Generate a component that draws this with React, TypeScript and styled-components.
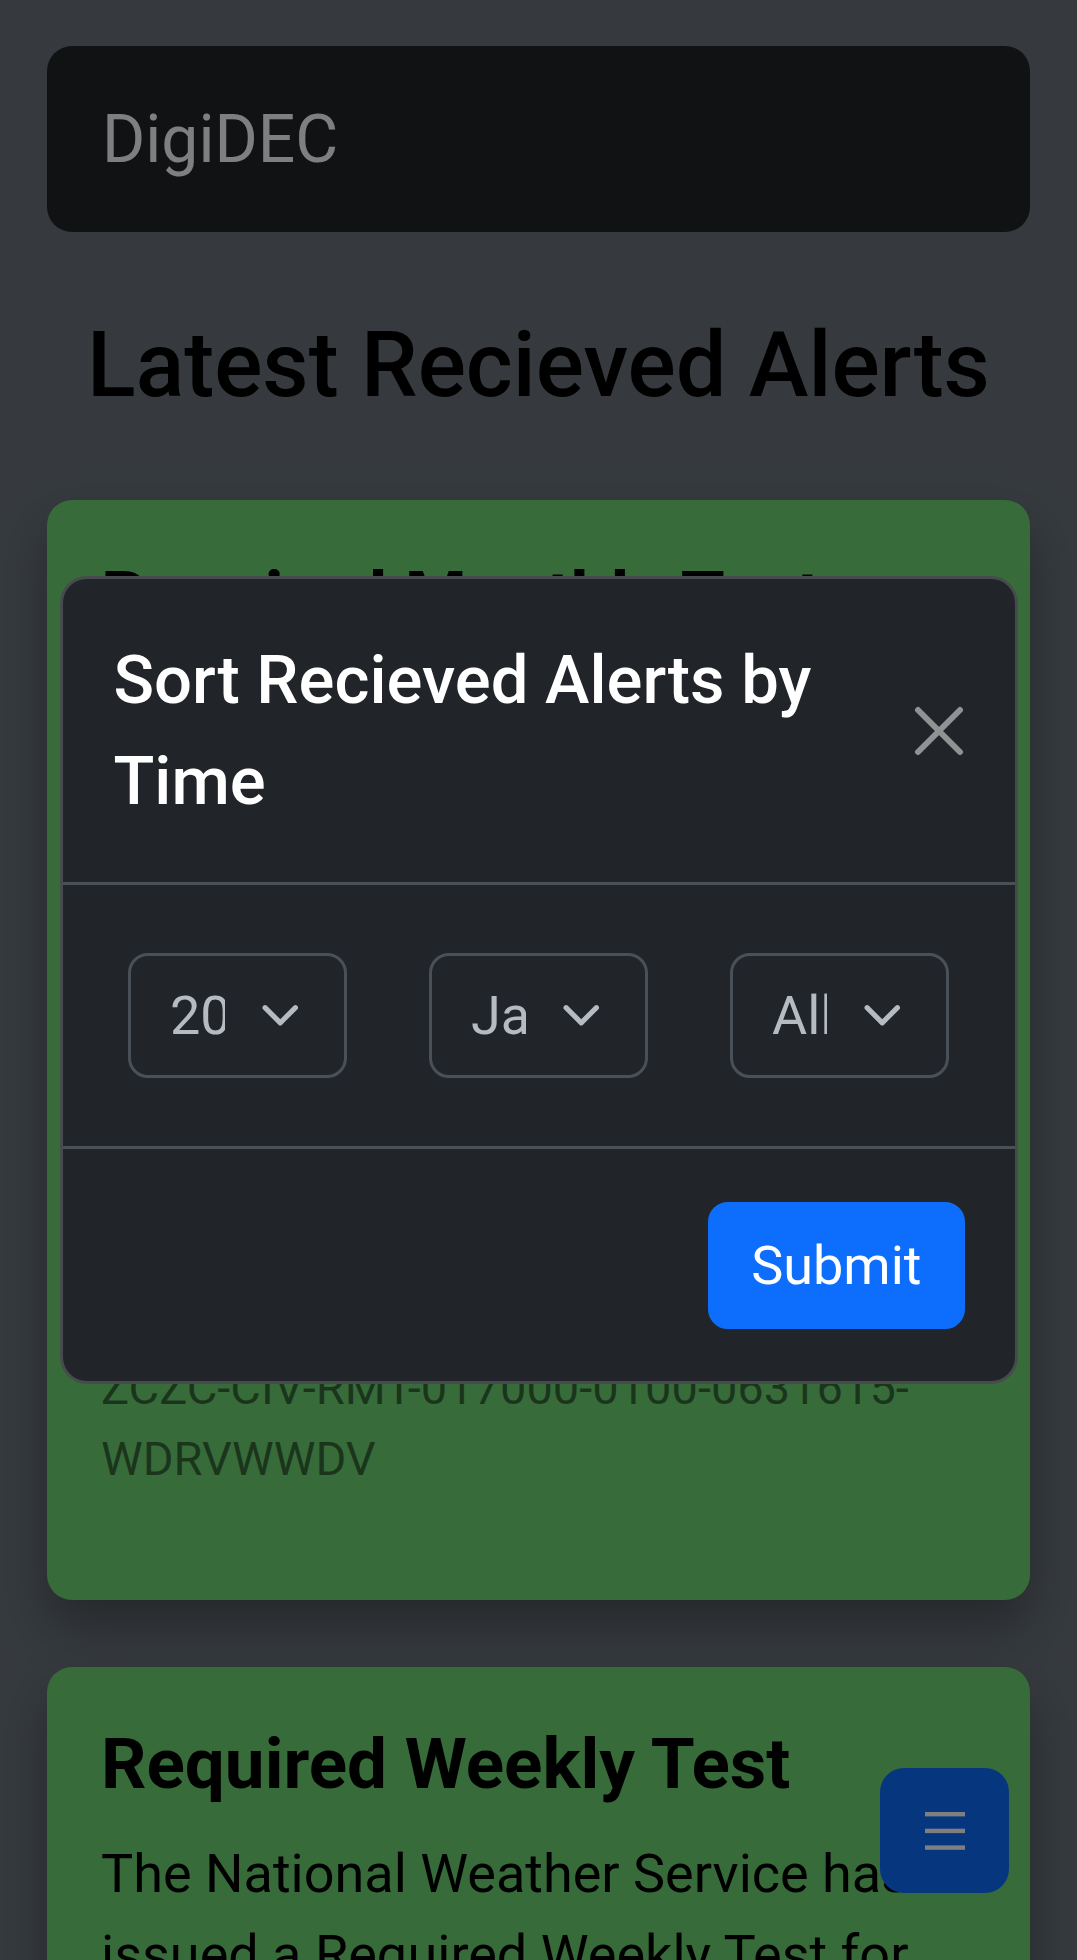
import { FC } from 'react';
import styled, { createGlobalStyle } from 'styled-components';

interface Alert {
  id: number;
  title: string;
  text: string;
  header: string;
}

const alerts: Alert[] = [
  {
    id: 1,
    title: 'Required Monthly Test',
    text: 'The National Weather Service has issued a Required Monthly Test for the following counties: Lancaster, PA; Berks, PA; Chester, PA; Lebanon, PA; York, PA; Dauphin, PA. Effective until 7:15 PM.',
    header: 'ZCZC-CIV-RMT-017000-0100-0631615-WDRVWWDV',
  },
  {
    id: 2,
    title: 'Required Weekly Test',
    text: 'The National Weather Service has issued a Required Weekly Test for the following counties: Lancaster, PA; Berks, PA; Chester, PA; Lebanon, PA; York, PA. Effective until 6:45 PM.',
    header: 'ZCZC-WXR-RWT-042071-0030-0621815-WDRVWWDV',
  },
];

const GlobalStyle = createGlobalStyle`
  html, body {
    margin: 0;
    padding: 0;
    background: #6c757d;
    font-family: Roboto, "Liberation Sans", sans-serif;
    overflow: hidden;
  }
  * {
    box-sizing: border-box;
  }
`;

const Page = styled.div`
  padding: 46px 47px 0;
`;

const Navbar = styled.nav`
  display: flex;
  align-items: center;
  height: 186px;
  padding: 0 55px;
  background: #212529;
  border-radius: 25px;
`;

const Brand = styled.a`
  color: #fff;
  font-size: 66px;
  line-height: 1.5;
  text-decoration: none;
`;

const Heading = styled.h1`
  margin: 80px 0;
  text-align: center;
  font-size: 90px;
  font-weight: 500;
  line-height: 1.2;
  color: #000;
`;

const Card = styled.div`
  padding: 54px;
  margin-bottom: 67px;
  background: #6ed672;
  border-radius: 25px;
  box-shadow: 0 27px 50px rgba(0, 0, 0, 0.3);
`;

const CardTitle = styled.h3`
  margin: 0 0 27px;
  font-size: 71px;
  font-weight: 700;
  line-height: 1.2;
  color: #000;
`;

const CardText = styled.p<{ $gap?: number }>`
  margin: 0 0 ${({ $gap }) => $gap ?? 54}px;
  font-size: 54px;
  line-height: 1.5;
  color: #000;
`;

const CardHeader = styled.p`
  margin: 0 0 52px;
  font-size: 47px;
  line-height: 1.5;
  color: rgba(0, 0, 0, 0.5);
`;

const Fab = styled.button`
  position: fixed;
  right: 68px;
  bottom: 67px;
  z-index: 1000;
  display: flex;
  align-items: center;
  justify-content: center;
  width: 129px;
  height: 125px;
  padding: 0;
  border: none;
  border-radius: 24px;
  background: #0d6efd;
`;

const Backdrop = styled.div`
  position: fixed;
  inset: 0;
  z-index: 1050;
  background: rgba(0, 0, 0, 0.5);
`;

const ModalWrap = styled.div`
  position: fixed;
  inset: 0;
  z-index: 1055;
  display: flex;
  align-items: center;
  justify-content: center;
`;

const Dialog = styled.div`
  width: 958px;
  background: #212529;
  border: 3px solid rgba(255, 255, 255, 0.175);
  border-radius: 27px;
`;

const ModalHeader = styled.div`
  display: flex;
  align-items: center;
  padding: 51px;
  border-bottom: 3px solid #495057;
`;

const ModalTitle = styled.h5`
  flex: 1;
  margin: 0 40px 0 0;
  font-size: 67px;
  font-weight: 500;
  line-height: 1.5;
  color: #fff;
`;

const CloseButton = styled.button`
  flex: none;
  width: 50px;
  height: 50px;
  padding: 0;
  border: none;
  background: none;
  color: #909294;
  display: flex;
`;

const ModalBody = styled.div`
  display: flex;
  justify-content: center;
  gap: 82px;
  padding: 68px 0;
`;

const Select = styled.div`
  display: flex;
  align-items: center;
  justify-content: space-between;
  width: 219px;
  height: 125px;
  padding: 0 44px 0 39px;
  border: 3px solid #495057;
  border-radius: 20px;
  background: #212529;
  color: #b5bbc1;
  font-size: 54px;
`;

const SelectValue = styled.span`
  width: 55px;
  overflow: hidden;
  white-space: nowrap;
  line-height: 81px;
`;

const ModalFooter = styled.div`
  display: flex;
  justify-content: flex-end;
  padding: 53px 50px 52px;
  border-top: 3px solid #495057;
`;

const SubmitButton = styled.button`
  padding: 20px 40px;
  border: 3px solid #0d6efd;
  border-radius: 20px;
  background: #0d6efd;
  color: #fff;
  font-family: inherit;
  font-size: 54px;
  line-height: 81px;
`;

const Chevron: FC = () => (
  <svg width="40.5" height="40.5" viewBox="0 0 16 16" fill="none">
    <path d="m2 5 6 6 6-6" stroke="#b5bbc1" strokeWidth="2" strokeLinecap="round" strokeLinejoin="round" />
  </svg>
);

const MenuIcon: FC = () => (
  <svg width="40" height="38" viewBox="0 0 40 38" fill="#fff">
    <rect x="0" y="0" width="40" height="4.4" />
    <rect x="0" y="16.7" width="40" height="4.4" />
    <rect x="0" y="33.4" width="40" height="4.4" />
  </svg>
);

const SortSelect: FC<{ value: string }> = ({ value }) => (
  <Select>
    <SelectValue>{value}</SelectValue>
    <Chevron />
  </Select>
);

export default function App() {
  return (
    <>
      <GlobalStyle />
      <Page>
        <Navbar>
          <Brand href="#">DigiDEC</Brand>
        </Navbar>
        <Heading>Latest Recieved Alerts</Heading>
        {alerts.map((alert, i) => (
          <Card key={alert.id}>
            <CardTitle>{alert.title}</CardTitle>
            <CardText $gap={i === 0 ? 201 : 54}>{alert.text}</CardText>
            <CardHeader>{alert.header}</CardHeader>
          </Card>
        ))}
      </Page>
      <Fab aria-label="Menu">
        <MenuIcon />
      </Fab>
      <Backdrop />
      <ModalWrap>
        <Dialog>
          <ModalHeader>
            <ModalTitle>Sort Recieved Alerts by Time</ModalTitle>
            <CloseButton aria-label="Close">
              <svg width="50" height="50" viewBox="0 0 50 50">
                <path d="M4 4 46 46M46 4 4 46" stroke="currentColor" strokeWidth="6" strokeLinecap="round" />
              </svg>
            </CloseButton>
          </ModalHeader>
          <ModalBody>
            <SortSelect value="2023" />
            <SortSelect value="January" />
            <SortSelect value="All" />
          </ModalBody>
          <ModalFooter>
            <SubmitButton>Submit</SubmitButton>
          </ModalFooter>
        </Dialog>
      </ModalWrap>
    </>
  );
}
